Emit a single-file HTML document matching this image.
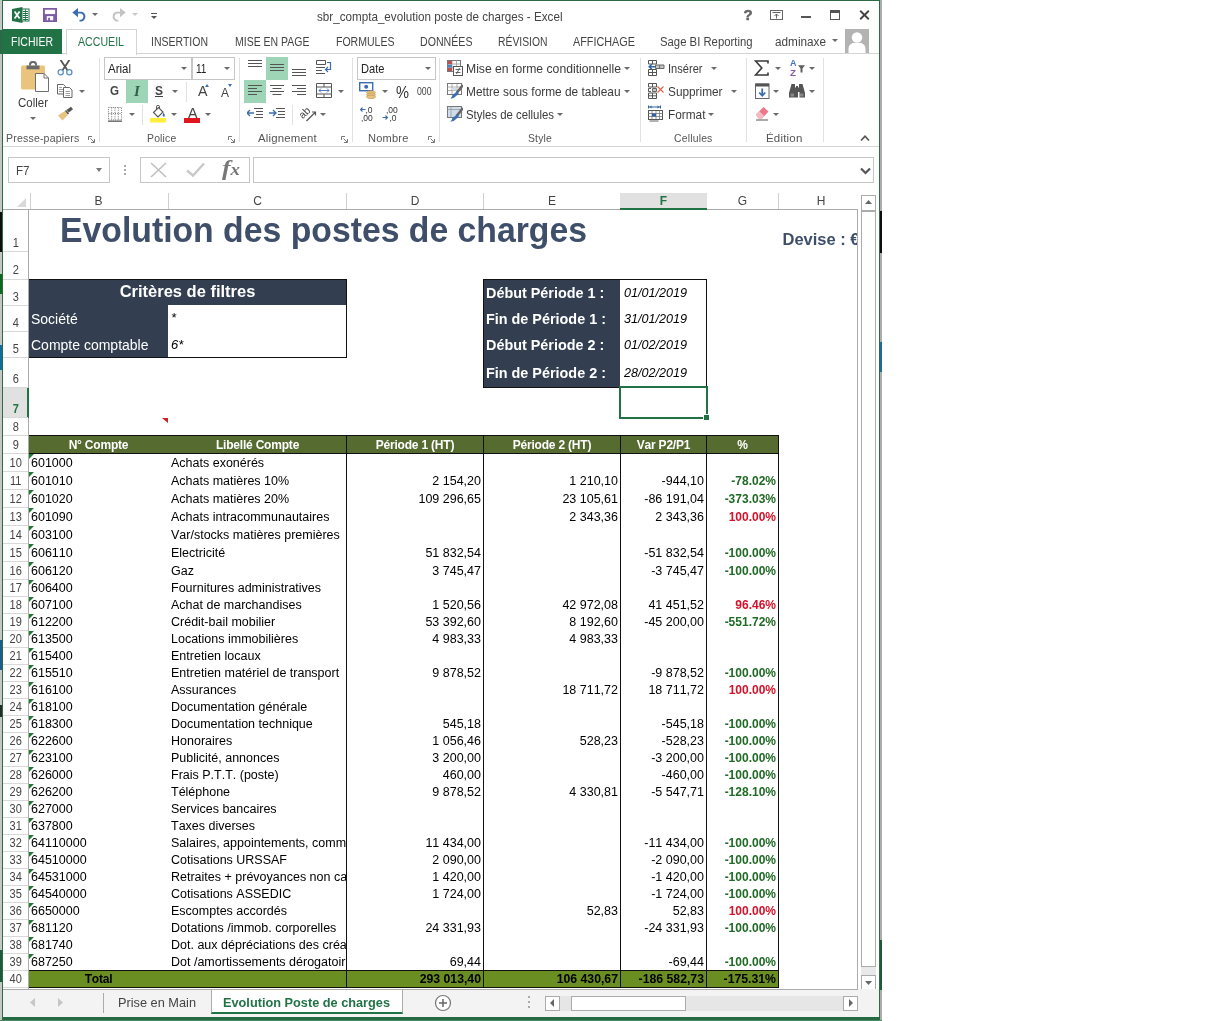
<!DOCTYPE html><html lang="fr"><head>
<meta charset="utf-8">
<title>sbr_compta_evolution poste de charges - Excel</title>
<style>
html,body{margin:0;padding:0;background:#fff;}
body{width:1228px;height:1021px;position:relative;overflow:hidden;font-family:"Liberation Sans",sans-serif;font-size:12px;color:#444;}
.a{position:absolute;}
.t{position:absolute;white-space:nowrap;line-height:1;}
.ui{color:#444;font-size:12px;}
.tab{position:absolute;top:36px;font-size:12.5px;line-height:13px;white-space:nowrap;color:#444;}
.gl{position:absolute;top:132px;font-size:11.5px;line-height:13px;white-space:nowrap;color:#555;letter-spacing:.2px;}
.rb{position:absolute;font-size:13px;line-height:14px;white-space:nowrap;color:#3c3c3c;}
.vsep{position:absolute;top:58px;width:1px;height:84px;background:#e1e1e1;}
.dd{position:absolute;width:0;height:0;border-left:3px solid transparent;border-right:3px solid transparent;border-top:3px solid #6a6a6a;}
.ch{position:absolute;top:193px;height:16px;line-height:16px;font-size:12px;text-align:center;color:#444;}
.chs{position:absolute;top:193px;width:1px;height:16px;background:#d0d0d0;}
.rh{position:absolute;left:3px;width:25.5px;text-align:center;font-size:12px;line-height:13px;color:#444;transform:scaleX(.92);margin-top:-.6px;}
.rl{position:absolute;left:3px;width:25px;height:1px;background:#d8d8d8;}
.c{position:absolute;white-space:nowrap;font-size:12.5px;line-height:14px;color:#000;font-kerning:none;}
.b{font-weight:bold;font-size:12px;letter-spacing:-.2px;}
.r{text-align:right;}
.g{color:#1f6a24;font-weight:bold;font-size:12px;}
.rd{color:#d3122a;font-weight:bold;font-size:12px;}
.tt{font-weight:bold;font-size:12.25px;}
.tri{position:absolute;left:29px;width:0;height:0;border-top:5px solid #1e7b34;border-right:5px solid transparent;}
</style>
</head>
<body>
<div id="app" style="position:absolute;left:0;top:0;width:1228px;height:1021px;will-change:transform">
<!-- ===== background bits outside window ===== -->
<div class="a" style="left:0;top:0;width:3px;height:1021px;background:#c3c9c4;"></div>
<div class="a" style="left:880px;top:0;width:2px;height:1021px;background:#a9aeab;"></div>
<div class="a" style="left:0;top:1020px;width:882px;height:1px;background:#4f8465;"></div>
<div class="a" style="left:0;top:30px;width:2px;height:24px;background:#2a6b47"></div>
<div class="a" style="left:0;top:212px;width:2px;height:40px;background:#0c0f0c"></div>
<div class="a" style="left:0;top:274px;width:2px;height:20px;background:#0a6a1a"></div>
<div class="a" style="left:0;top:345px;width:2px;height:25px;background:#0f6f9a"></div>
<div class="a" style="left:0;top:640px;width:2px;height:30px;background:#1b5f8a"></div>
<div class="a" style="left:0;top:705px;width:2px;height:12px;background:#20302a"></div>
<div class="a" style="left:0;top:950px;width:2px;height:32px;background:#1d5a38"></div>
<div class="a" style="left:880px;top:211px;width:2px;height:42px;background:#0c0f0c"></div>
<div class="a" style="left:880px;top:342px;width:2px;height:30px;background:#1b6f95"></div>
<div class="a" style="left:880px;top:940px;width:2px;height:50px;background:#1d5a38"></div>
<!-- ===== window frame ===== -->
<div id="win" class="a" style="left:2px;top:0;width:876px;height:1016px;background:#fff;border:1px solid #2b6b45;border-bottom:3px solid #246a43;"></div>

<!-- TITLEBAR -->
<div id="titlebar">
<!-- excel logo -->
<svg class="a" style="left:12px;top:7px" width="18" height="16" viewBox="0 0 18 16">
<rect x="9" y="2" width="8" height="12" fill="#fff" stroke="#217346" stroke-width="1"></rect>
<path d="M11 4.5h5M11 6.5h5M11 8.5h5M11 10.5h5M11 12.5h5" stroke="#217346" stroke-width="1"></path>
<path d="M13.5 2v12" stroke="#217346" stroke-width=".8"></path>
<path d="M0 2 L10.5 0 V16 L0 14Z" fill="#217346"></path>
<path d="M2.6 4.6 L7.6 11.6 M7.6 4.6 L2.6 11.6" stroke="#fff" stroke-width="1.7"></path>
</svg>
<!-- save -->
<svg class="a" style="left:43px;top:8px" width="14" height="14" viewBox="0 0 15 15">
<path d="M1 1h13v13H1z" fill="none" stroke="#7d5ba6" stroke-width="2"></path>
<rect x="1" y="6.5" width="13" height="2.2" fill="#7d5ba6"></rect>
<rect x="1" y="8" width="3" height="6" fill="#7d5ba6"></rect><rect x="11" y="8" width="3" height="6" fill="#7d5ba6"></rect>
<rect x="5.5" y="10.5" width="2" height="3.5" fill="#7d5ba6"></rect>
</svg>
<!-- undo -->
<svg class="a" style="left:71.5px;top:6.500px" width="17" height="15" viewBox="0 0 17 15">
<path d="M2.2 5.6 H9.5 A4.2 4.2 0 0 1 9.5 13.6 H7.5" fill="none" stroke="#3b6db5" stroke-width="1.9"></path>
<path d="M0.3 5.6 L6 1 V10.2Z" fill="#3b6db5"></path>
</svg>
<div class="dd" style="left:92px;top:13px"></div>
<!-- redo -->
<svg class="a" style="left:109px;top:6.500px" width="17" height="15" viewBox="0 0 17 15">
<path d="M14.8 5.6 H7.5 A4.2 4.2 0 0 0 7.5 13.6 H9.5" fill="none" stroke="#c3c3c3" stroke-width="1.9"></path>
<path d="M16.7 5.6 L11 1 V10.2Z" fill="#c3c3c3"></path>
</svg>
<div class="dd" style="left:131.5px;top:13px;border-top-color:#c8c8c8"></div>
<!-- customize -->
<div class="a" style="left:151px;top:13px;width:6px;height:1px;background:#555"></div>
<div class="dd" style="left:150.5px;top:16px;border-top-color:#555"></div>
<div class="t" id="ttl" style="left: 317px; top: 10px; font-size: 13px; color: rgb(68, 68, 68); --w: 245.5; transform: scaleX(0.8963); transform-origin: 0px 50%;">sbr_compta_evolution poste de charges - Excel</div>
<!-- window buttons -->
<div class="t" style="left:743.5px;top:7px;font-size:15px;font-weight:bold;color:#666;-webkit-text-stroke:.5px #666;">?</div>
<svg class="a" style="left:770px;top:10px" width="13" height="10" viewBox="0 0 13 10"><rect x=".5" y=".5" width="12" height="9" fill="none" stroke="#666"></rect><path d="M2.500 2.500h8" stroke="#666"></path><path d="M6.500 8.500V4M4.500 6L6.500 4 8.500 6" stroke="#666" fill="none"></path></svg>
<div class="a" style="left:801px;top:16px;width:10px;height:2px;background:#555"></div>
<div class="a" style="left:830px;top:10px;width:8px;height:6px;border:1px solid #555;border-top:3px solid #555"></div>
<svg class="a" style="left:859px;top:10px" width="11" height="10" viewBox="0 0 11 10"><path d="M1.200 .8l8.600 8.400M9.800 .8L1.200 9.200" stroke="#444" stroke-width="1.900"></path></svg>
</div>
<!-- TABS -->
<div id="tabs">
<div class="a" style="left:3px;top:53px;width:876px;height:1px;background:#d4d4d4"></div>
<div class="a" style="left:3px;top:29px;width:59px;height:25px;background:#217346"></div>
<div class="tab" style="left: 11px; color: rgb(255, 255, 255); --w: 42; transform: scaleX(0.84); transform-origin: 0px 50%;">FICHIER</div>
<div class="a" style="left:66px;top:29px;width:69px;height:25px;background:#fff;border:1px solid #d4d4d4;border-bottom:none;"></div>
<div class="tab" style="left: 78px; color: rgb(33, 115, 70); --w: 46; transform: scaleX(0.8489); transform-origin: 0px 50%;">ACCUEIL</div>
<div class="tab" style="left: 151px; --w: 57; transform: scaleX(0.8402); transform-origin: 0px 50%;">INSERTION</div>
<div class="tab" style="left: 235px; --w: 74.5; transform: scaleX(0.84); transform-origin: 0px 50%;">MISE EN PAGE</div>
<div class="tab" style="left: 336px; --w: 58.5; transform: scaleX(0.8423); transform-origin: 0px 50%;">FORMULES</div>
<div class="tab" style="left: 420px; --w: 52.5; transform: scaleX(0.8491); transform-origin: 0px 50%;">DONNÉES</div>
<div class="tab" style="left: 498px; --w: 49.5; transform: scaleX(0.8285); transform-origin: 0px 50%;">RÉVISION</div>
<div class="tab" style="left: 573px; --w: 62; transform: scaleX(0.8666); transform-origin: 0px 50%;">AFFICHAGE</div>
<div class="tab" style="left: 660px; --w: 92.5; transform: scaleX(0.9055); transform-origin: 0px 50%;">Sage BI Reporting</div>
<div class="tab" style="left: 775px; --w: 51; transform: scaleX(0.9409); transform-origin: 0px 50%;">adminaxe</div>
<div class="dd" style="left:832px;top:39px"></div>
<!-- avatar -->
<svg class="a" style="left:845px;top:29px" width="24" height="24" viewBox="0 0 24 24"><rect width="24" height="24" fill="#b3b3b3"></rect><circle cx="12" cy="8.500" r="5.200" fill="#fff"></circle><path d="M3.500 24v-4c0-3.500 2.500-6 5.500-6h6c3 0 5.500 2.500 5.500 6v4z" fill="#fff"></path></svg>
</div>
<!-- RIBBON -->
<div id="ribbon">
<div class="a" style="left:3px;top:146px;width:876px;height:1px;background:#d4d4d4"></div>
<!-- group separators -->
<div class="vsep" style="left:99px"></div><div class="vsep" style="left:239px"></div><div class="vsep" style="left:352px"></div><div class="vsep" style="left:439px"></div><div class="vsep" style="left:640px"></div><div class="vsep" style="left:746px"></div><div class="vsep" style="left:823px"></div>
<!-- group labels -->
<div class="gl" style="left: 6px; --w: 73.5; transform: scaleX(0.9171); transform-origin: 0px 50%;">Presse-papiers</div>
<div class="gl" style="left: 146.5px; --w: 29.5; transform: scaleX(0.9068); transform-origin: 0px 50%;">Police</div>
<div class="gl" style="left: 258px; --w: 59; transform: scaleX(0.9908); transform-origin: 0px 50%;">Alignement</div>
<div class="gl" style="left: 367.5px; --w: 40.5; transform: scaleX(0.9618); transform-origin: 0px 50%;">Nombre</div>
<div class="gl" style="left: 528px; --w: 24; transform: scaleX(0.903); transform-origin: 0px 50%;">Style</div>
<div class="gl" style="left: 674px; --w: 38.5; transform: scaleX(0.9055); transform-origin: 0px 50%;">Cellules</div>
<div class="gl" style="left: 766px; --w: 36.5; transform: scaleX(0.9979); transform-origin: 0px 50%;">Édition</div>
<!-- launchers -->
<svg class="a" style="left:88px;top:136px" width="7" height="7" viewBox="0 0 7 7"><path d="M.5 4V.5H4" fill="none" stroke="#777"></path><path d="M2.5 2.5L6 6M6.5 3v3.500H3" fill="none" stroke="#777"></path></svg>
<svg class="a" style="left:228px;top:136px" width="7" height="7" viewBox="0 0 7 7"><path d="M.5 4V.5H4" fill="none" stroke="#777"></path><path d="M2.5 2.5L6 6M6.5 3v3.500H3" fill="none" stroke="#777"></path></svg>
<svg class="a" style="left:341px;top:136px" width="7" height="7" viewBox="0 0 7 7"><path d="M.5 4V.5H4" fill="none" stroke="#777"></path><path d="M2.5 2.5L6 6M6.5 3v3.500H3" fill="none" stroke="#777"></path></svg>
<svg class="a" style="left:428px;top:136px" width="7" height="7" viewBox="0 0 7 7"><path d="M.5 4V.5H4" fill="none" stroke="#777"></path><path d="M2.5 2.5L6 6M6.5 3v3.500H3" fill="none" stroke="#777"></path></svg>
<!-- collapse chevron -->
<svg class="a" style="left:860px;top:134px" width="10" height="8" viewBox="0 0 10 8"><path d="M1 6.500L5 2.200 9 6.500" fill="none" stroke="#555" stroke-width="1.700"></path></svg>
<!-- CLIPBOARD group -->
<svg class="a" style="left:21px;top:61px" width="29" height="31" viewBox="0 0 29 31">
<rect x="0" y="4.500" width="24" height="24" rx="1.500" fill="#eac37d"></rect>
<path d="M5.500 4.500h13v3.800h-13z" fill="#6a6a6a"></path><path d="M9 4.500V3.500a3 2.600 0 0 1 6 0V4.500" fill="none" stroke="#6a6a6a" stroke-width="2"></path><circle cx="12" cy="3.300" r="1" fill="#fff"></circle>
<path d="M14.500 12.500H23L27.500 17V30.500H14.500Z" fill="#fff" stroke="#707070"></path><path d="M23 12.500V17H27.500" fill="none" stroke="#707070"></path>
</svg>
<div class="rb" style="left: 17.5px; top: 96px; font-size: 13px; --w: 30; transform: scaleX(0.8832); transform-origin: 0px 50%;">Coller</div>
<div class="dd" style="left:30px;top:117px"></div>
<!-- scissors -->
<svg class="a" style="left:57px;top:60px" width="16" height="16" viewBox="0 0 16 16">
<path d="M3.800 .3 L10.300 10 M12.200 .3 L5.700 10" stroke="#555" stroke-width="1.800" fill="none" stroke-linecap="round"></path>
<circle cx="3.700" cy="12.300" r="2.600" fill="#fff" stroke="#5c8fc9" stroke-width="1.300"></circle><circle cx="12.300" cy="12.300" r="2.600" fill="#fff" stroke="#5c8fc9" stroke-width="1.300"></circle>
</svg>
<!-- copy -->
<svg class="a" style="left:57px;top:84px" width="16" height="14" viewBox="0 0 16 14">
<path d="M.5 .5h6l2 2v7.500h-8z" fill="#fff" stroke="#666"></path><path d="M2 3.500h3M2 5.500h4M2 7.500h4" stroke="#888" stroke-width=".8"></path>
<path d="M6.500 3.500h6l2.500 2.500v7.500h-8.500z" fill="#fff" stroke="#666"></path><path d="M8.500 7.500h4.500M8.500 9.500h4.500M8.500 11.500h4.500" stroke="#888" stroke-width=".8"></path>
</svg>
<div class="dd" style="left:79px;top:90px"></div>
<!-- format painter -->
<svg class="a" style="left:57px;top:106px" width="17" height="15" viewBox="0 0 17 15">
<path d="M9.500 4 L14 .8 L16 3.200 L11.800 6.500Z" fill="#555"></path>
<path d="M8.500 4.500 L11.500 8" stroke="#555" stroke-width="1.800"></path>
<path d="M1 9.500 L7.800 5 L11 8.800 L5.500 14.500 Z" fill="#e8c27e"></path>
</svg>
<!-- FONT group -->
<div class="a" style="left:104px;top:57px;width:86px;height:21px;border:1px solid #c6c6c6;background:#fff"></div>
<div class="a" style="left:192px;top:57px;width:41px;height:21px;border:1px solid #c6c6c6;background:#fff"></div>
<div class="rb" style="left: 107.5px; top: 62px; color: rgb(34, 34, 34); --w: 23; transform: scaleX(0.8841); transform-origin: 0px 50%;">Arial</div>
<div class="dd" style="left:181px;top:67px"></div>
<div class="rb" style="left: 196px; top: 62px; color: rgb(34, 34, 34); --w: 10.5; transform: scaleX(0.7778); transform-origin: 0px 50%;">11</div>
<div class="dd" style="left:224px;top:67px"></div>
<div class="a" style="left:126px;top:80px;width:22px;height:23px;background:#9fd5b7"></div>
<div class="rb" style="left: 110px; top: 84px; font-weight: bold; font-size: 13px; color: rgb(68, 68, 68); --w: 9; transform: scaleX(0.8889); transform-origin: 0px 50%;">G</div>
<div class="rb" style="left:134px;top:83.5px;font-style:italic;font-weight:bold;font-size:15px;font-family:'Liberation Serif',serif;color:#2f5f49;">I</div>
<div class="rb" style="left: 155px; top: 84px; font-size: 13px; font-weight: bold; color: rgb(68, 68, 68); text-decoration: underline; --w: 8; transform: scaleX(0.9225); transform-origin: 0px 50%;">S</div>
<div class="dd" style="left:172px;top:90px"></div>
<div class="a" style="left:186px;top:82px;width:1px;height:20px;background:#e1e1e1"></div>
<div class="rb" style="left: 197.5px; top: 84px; font-size: 14.5px; color: rgb(68, 68, 68); --w: 9.5; transform: scaleX(0.9822); transform-origin: 0px 50%;">A</div>
<div class="a" style="left:205px;top:84px;width:0;height:0;border-left:2.5px solid transparent;border-right:2.5px solid transparent;border-bottom:3px solid #3b6db5"></div>
<div class="rb" style="left: 220.5px; top: 86px; font-size: 12px; color: rgb(68, 68, 68); --w: 8; transform: scaleX(0.9981); transform-origin: 0px 50%;">A</div>
<div class="a" style="left:227.5px;top:84px;width:0;height:0;border-left:2.5px solid transparent;border-right:2.5px solid transparent;border-top:3px solid #3b6db5"></div>
<!-- borders icon -->
<svg class="a" style="left:108px;top:107px" width="14" height="15" viewBox="0 0 14 15"><path d="M.5 .5h13v12.500H.5zM7 .5v12.500M.5 6.500h13M3.700 .5v12.500M10.300 .5v12.500" fill="none" stroke="#777" stroke-dasharray="1 1.200"></path><path d="M0 14.200h14" stroke="#555" stroke-width="1.200"></path></svg>
<div class="dd" style="left:129px;top:113px"></div>
<div class="a" style="left:142px;top:105px;width:1px;height:20px;background:#e1e1e1"></div>
<!-- fill bucket -->
<svg class="a" style="left:150px;top:105px" width="17" height="18" viewBox="0 0 17 18">
<path d="M3.500 7.500 L8.500 2.500 L13 7 L8 12 Z" fill="#fff" stroke="#555" stroke-width="1.100"></path>
<path d="M6.500 5 V1.800 a1.500 1.500 0 0 1 3 0 V4" fill="none" stroke="#555" stroke-width="1"></path>
<path d="M13.300 7.300 q2 2.500 1.200 4.200 q-1.500 .8 -1.800 -1.200z" fill="#3b6db5"></path>
<rect x="0" y="13" width="16" height="4.500" fill="#ffef3a"></rect>
</svg>
<div class="dd" style="left:171px;top:113px"></div>
<!-- font color -->
<div class="rb" style="left: 187.5px; top: 106px; font-size: 14.5px; color: rgb(68, 68, 68); --w: 9.5; transform: scaleX(0.9822); transform-origin: 0px 50%;">A</div>
<div class="a" style="left:184px;top:118px;width:16px;height:4.500px;background:#e0161e"></div>
<div class="dd" style="left:205px;top:113px"></div>
<!-- ALIGN group -->
<div class="a" style="left:266px;top:57px;width:22px;height:23px;background:#9fd5b7"></div>
<div class="a" style="left:244px;top:80px;width:22px;height:23px;background:#9fd5b7"></div>
<!-- top/middle/bottom align -->
<svg class="a" style="left:248px;top:60px" width="14" height="8" viewBox="0 0 14 8"><path d="M0 .5h14M0 3.500h14M0 6.500h14" stroke="#555"></path></svg>
<svg class="a" style="left:270px;top:64px" width="14" height="8" viewBox="0 0 14 8"><path d="M0 .5h14M0 3.500h14M0 6.500h14" stroke="#555"></path></svg>
<svg class="a" style="left:292px;top:69px" width="14" height="8" viewBox="0 0 14 8"><path d="M0 .5h14M0 3.500h14M0 6.500h14" stroke="#555"></path></svg>
<!-- wrap text -->
<svg class="a" style="left:316px;top:60px" width="17" height="15" viewBox="0 0 17 15"><path d="M.5 .5h9v4H.5z" fill="none" stroke="#555"></path><path d="M0 7.500h9M0 10.500h6M0 13.500h9" stroke="#555"></path><path d="M11 2.500h3.500v7H10" fill="none" stroke="#3b6db5" stroke-width="1.200"></path><path d="M12 7L9.500 9.500 12 12" fill="none" stroke="#3b6db5" stroke-width="1.200"></path></svg>
<!-- left/center/right -->
<svg class="a" style="left:248px;top:85px" width="14" height="12" viewBox="0 0 14 12"><path d="M0 .5h14M0 3.500h9M0 6.500h14M0 9.500h9" stroke="#555"></path></svg>
<svg class="a" style="left:270px;top:85px" width="14" height="12" viewBox="0 0 14 12"><path d="M0 .5h14M2.500 3.500h9M0 6.500h14M2.500 9.500h9" stroke="#555"></path></svg>
<svg class="a" style="left:292px;top:85px" width="14" height="12" viewBox="0 0 14 12"><path d="M0 .5h14M5 3.500h9M0 6.500h14M5 9.500h9" stroke="#555"></path></svg>
<!-- merge -->
<svg class="a" style="left:316px;top:83px" width="16" height="15" viewBox="0 0 16 15"><path d="M.5 .5h15v14H.5zM.5 4h15M.5 11h15M8 .5V4M8 11v3.500" fill="none" stroke="#555"></path><path d="M3 7.500h10M5 5.500L3 7.500 5 9.500M11 5.500l2 2-2 2" fill="none" stroke="#3b6db5" stroke-width=".9"></path></svg>
<div class="dd" style="left:338px;top:90px"></div>
<!-- indents -->
<svg class="a" style="left:247px;top:108px" width="16" height="12" viewBox="0 0 16 12"><path d="M7 .5h9M9 3.500h7M9 6.500h7M7 9.500h9" stroke="#555"></path><path d="M0 5h7M3 2L0 5l3 3" fill="none" stroke="#3b6db5" stroke-width="1.300"></path></svg>
<svg class="a" style="left:269px;top:108px" width="16" height="12" viewBox="0 0 16 12"><path d="M7 .5h9M9 3.500h7M9 6.500h7M7 9.500h9" stroke="#555"></path><path d="M0 5h7M4 2l3 3-3 3" fill="none" stroke="#3b6db5" stroke-width="1.300"></path></svg>
<div class="a" style="left:292px;top:105px;width:1px;height:20px;background:#e1e1e1"></div>
<!-- orientation -->
<svg class="a" style="left:300px;top:105px" width="18" height="17" viewBox="0 0 18 17"><text x="0" y="10.500" font-family="Liberation Sans, sans-serif" font-size="10.500" fill="#444" transform="rotate(-45 6 9)">ab</text><path d="M6.500 16L15.500 7M15.500 10.500V7H12" fill="none" stroke="#555" stroke-width="1.200"></path></svg>
<div class="dd" style="left:320px;top:113px"></div>
<!-- NUMBER group -->
<div class="a" style="left:357px;top:57px;width:77px;height:21px;border:1px solid #c6c6c6;background:#fff"></div>
<div class="rb" style="left: 360.5px; top: 62px; color: rgb(34, 34, 34); --w: 23.5; transform: scaleX(0.8555); transform-origin: 0px 50%;">Date</div>
<div class="dd" style="left:425px;top:67px"></div>
<!-- currency -->
<svg class="a" style="left:359px;top:82px" width="18" height="17" viewBox="0 0 18 17"><rect x=".7" y=".7" width="13" height="8" fill="#fff" stroke="#3b6db5" stroke-width="1.400"></rect><circle cx="7.200" cy="4.700" r="2" fill="#3b6db5"></circle><ellipse cx="12" cy="10.500" rx="4.500" ry="1.800" fill="#e8c27e" stroke="#b8924e" stroke-width=".6"></ellipse><ellipse cx="12" cy="12.700" rx="4.500" ry="1.800" fill="#e8c27e" stroke="#b8924e" stroke-width=".6"></ellipse><ellipse cx="12" cy="14.800" rx="4.500" ry="1.800" fill="#e8c27e" stroke="#b8924e" stroke-width=".6"></ellipse></svg>
<div class="dd" style="left:382px;top:90px"></div>
<div class="rb" style="left: 396px; top: 83.5px; font-size: 16px; line-height: 18px; color: rgb(51, 51, 51); --w: 13; transform: scaleX(0.9133); transform-origin: 0px 50%;">%</div>
<div class="rb" style="left: 417px; top: 85px; font-size: 11px; line-height: 12px; color: rgb(68, 68, 68); --w: 14.5; transform: scaleX(0.7898); transform-origin: 0px 50%;">000</div>
<!-- inc/dec decimals -->
<svg class="a" style="left:360px;top:106px" width="16" height="16" viewBox="0 0 16 16"><text x="5.500" y="6.500" font-family="Liberation Sans, sans-serif" font-size="8.500" fill="#333">,0</text><text x="1" y="14.500" font-family="Liberation Sans, sans-serif" font-size="8.500" fill="#333">,00</text><path d="M.5 3.500h5M2.500 1.500l-2 2 2 2" fill="none" stroke="#3b6db5" stroke-width="1.100"></path></svg>
<svg class="a" style="left:382px;top:106px" width="16" height="16" viewBox="0 0 16 16"><text x="4" y="6.500" font-family="Liberation Sans, sans-serif" font-size="8.500" fill="#333">,00</text><text x="7.500" y="14.500" font-family="Liberation Sans, sans-serif" font-size="8.500" fill="#333">,0</text><path d="M.5 11.500h5M3.500 9.500l2 2-2 2" fill="none" stroke="#3b6db5" stroke-width="1.100"></path></svg>
<!-- STYLE group -->
<svg class="a" style="left:447px;top:60px" width="16" height="16" viewBox="0 0 16 16"><rect x=".5" y=".5" width="13" height="11" fill="#fff" stroke="#777"></rect><path d="M.5 4h13M.5 7.500h13M5 .5v11M9.500 .5v11" stroke="#999" stroke-width=".8"></path><rect x="1" y="1" width="4" height="3" fill="#c0504d"></rect><rect x="1" y="4.500" width="4" height="3" fill="#4f81bd"></rect><rect x="1" y="8" width="4" height="3" fill="#c0504d"></rect><rect x="6.500" y="6.500" width="9" height="9" fill="#fff" stroke="#555"></rect><path d="M8.500 9.500h5M8.500 12.500h5M12.500 8l-3 6" stroke="#555" stroke-width=".9"></path></svg>
<svg class="a" style="left:447px;top:83px" width="16" height="16" viewBox="0 0 16 16"><rect x=".5" y=".5" width="14" height="11" fill="#fff" stroke="#777"></rect><path d="M.5 4h14M.5 7.500h14M5 .5v11M10 .5v11" stroke="#999" stroke-width=".8"></path><rect x="5.500" y="4.500" width="4" height="3" fill="#cfdcec"></rect><path d="M15.200 3L10 9.500" stroke="#666" stroke-width="2.600" stroke-linecap="round"></path><path d="M10.500 8.500q1.500 1 1 2.500L7 14.800q-2 1-3.500 .5 1.500-1 2-3.500z" fill="#3f6fb0"></path></svg>
<svg class="a" style="left:447px;top:106px" width="16" height="16" viewBox="0 0 16 16"><rect x=".5" y=".5" width="14" height="11" fill="#cfdcec" stroke="#777"></rect><path d="M.5 3.500h14M4 .5v11" stroke="#999" stroke-width=".8"></path><path d="M15.200 3L10 9.500" stroke="#666" stroke-width="2.600" stroke-linecap="round"></path><path d="M10.500 8.500q1.500 1 1 2.500L7 14.800q-2 1-3.500 .5 1.500-1 2-3.500z" fill="#3f6fb0"></path></svg>
<div class="rb" style="left: 466px; top: 62px; --w: 155; transform: scaleX(0.9366); transform-origin: 0px 50%;">Mise en forme conditionnelle</div>
<div class="dd" style="left:624px;top:67px"></div>
<div class="rb" style="left: 466px; top: 85px; --w: 154.5; transform: scaleX(0.9137); transform-origin: 0px 50%;">Mettre sous forme de tableau</div>
<div class="dd" style="left:624px;top:90px"></div>
<div class="rb" style="left: 466px; top: 108px; --w: 88; transform: scaleX(0.876); transform-origin: 0px 50%;">Styles de cellules</div>
<div class="dd" style="left:556.5px;top:113px"></div>
<!-- CELLS group -->
<svg class="a" style="left:648px;top:60px" width="17" height="16" viewBox="0 0 17 16"><path d="M.5 .5h8v3.500h-8zM4.500 .5v3.500M.5 9.500h8v6h-8zM4.500 9.500v6M.5 12.500h8" fill="#fff" stroke="#555"></path><path d="M7.500 5h8.500v3.500H7.500z" fill="#c8c8c8" stroke="#666"></path><path d="M11.700 5v3.500" stroke="#666"></path><path d="M7 6.800H1.500M3.800 4.300L1.200 6.800l2.600 2.500" fill="none" stroke="#2f62a8" stroke-width="1.500"></path></svg>
<svg class="a" style="left:648px;top:83px" width="17" height="16" viewBox="0 0 17 16"><path d="M.5 .5h8v3.500h-8zM4.500 .5v3.500M.5 10h8v5.500h-8zM4.500 10v5.500M.5 12.800h8" fill="#fff" stroke="#555"></path><path d="M4.500 5.500h4v3h-4z" fill="#c8c8c8" stroke="#666"></path><path d="M.5 5.500h2.500M.5 5.500v3h2.500" fill="none" stroke="#555"></path><path d="M9.500 3.500l6 6M15.500 3.500l-6 6" stroke="#df6b4f" stroke-width="1.300"></path></svg>
<svg class="a" style="left:648px;top:105px" width="17" height="17" viewBox="0 0 17 17"><path d="M.5 .5v3M12.500 .5v3M.5 2h12" stroke="#2f62a8" fill="none"></path><path d="M3.500 .5l-2 1.500 2 1.500zM9.500 .5l2 1.500-2 1.500z" fill="#2f62a8"></path><rect x=".5" y="5.500" width="14" height="9" fill="#fff" stroke="#555"></rect><path d="M.5 8.500h14M.5 11.500h14M4 5.500v9M8 5.500v9M11.500 5.500v9" stroke="#777" stroke-width=".8"></path><rect x="4" y="8.500" width="4" height="3" fill="#2f62a8"></rect><path d="M1.500 16h9" stroke="#666"></path></svg>
<div class="rb" style="left: 667.5px; top: 62px; --w: 34.5; transform: scaleX(0.8525); transform-origin: 0px 50%;">Insérer</div>
<div class="dd" style="left:711px;top:67px"></div>
<div class="rb" style="left: 667.5px; top: 85px; --w: 54.5; transform: scaleX(0.9088); transform-origin: 0px 50%;">Supprimer</div>
<div class="dd" style="left:731px;top:90px"></div>
<div class="rb" style="left: 667.5px; top: 108px; --w: 37.5; transform: scaleX(0.9108); transform-origin: 0px 50%;">Format</div>
<div class="dd" style="left:707.5px;top:113px"></div>
<!-- EDIT group -->
<svg class="a" style="left:754px;top:60px" width="15" height="16" viewBox="0 0 15 16"><path d="M14 3.500V1H1.500l6.300 7L1.500 15H14v-2.500" fill="none" stroke="#3a3a3a" stroke-width="1.600"></path></svg>
<div class="dd" style="left:775px;top:67px"></div>
<div class="rb" style="left: 789.5px; top: 58px; font-size: 9.5px; line-height: 10px; font-weight: bold; color: rgb(63, 116, 184); --w: 6.500; transform: scaleX(0.9455); transform-origin: 0px 50%;">A</div>
<div class="rb" style="left: 790px; top: 67.5px; font-size: 9.5px; line-height: 10px; font-weight: bold; color: rgb(139, 91, 166); --w: 6; transform: scaleX(1.0323); transform-origin: 0px 50%;">Z</div>
<svg class="a" style="left:798px;top:65px" width="7" height="8" viewBox="0 0 7 8"><path d="M0 .3h7L4.500 3.500v4h-2v-4z" fill="#606060"></path></svg>
<div class="dd" style="left:809px;top:67px"></div>
<svg class="a" style="left:755px;top:83px" width="15" height="16" viewBox="0 0 15 16"><rect x=".5" y="1" width="13.500" height="14.500" fill="#fff" stroke="#666"></rect><rect x=".5" y=".5" width="13.500" height="3" fill="#555"></rect><path d="M7.250 5.500v7M4.200 9.500l3.050 3.200 3.050-3.200" fill="none" stroke="#3b6db5" stroke-width="1.800"></path></svg>
<div class="dd" style="left:773px;top:90px"></div>
<svg class="a" style="left:789px;top:83px" width="16" height="15" viewBox="0 0 16 15"><path d="M2.500 1h3.500v3.500h1V3h2v1.500h1V1h3.500l2.500 9v4.500h-5.500V9h-1.500v5.500H0V10z" fill="#555"></path><path d="M1.500 10.500h3.500v3h-3.500zM11 10.500h3.500v3H11z" fill="#888"></path></svg>
<div class="dd" style="left:809px;top:90px"></div>
<svg class="a" style="left:755px;top:106px" width="15" height="15" viewBox="0 0 15 15"><path d="M1 8.500L8.500 1 13.500 5.500 7 12.500H3.500z" fill="#e8788a"></path><path d="M1 8.500l3.300-3.300 5 4.500L7 12.500H3.500z" fill="#f4b9c2"></path><path d="M1 14h12" stroke="#555" stroke-width="1"></path></svg>
<div class="dd" style="left:773px;top:113px"></div>
</div>
<!-- FORMULA -->
<div id="formula">
<div class="a" style="left:8px;top:157px;width:100px;height:24px;border:1px solid #c6c6c6;background:#fff"></div>
<div class="t" style="left: 15.5px; top: 165px; font-size: 12.5px; color: rgb(68, 68, 68); --w: 13.5; transform: scaleX(0.9251); transform-origin: 0px 50%;">F7</div>
<div class="a" style="left:96px;top:168px;width:0;height:0;border-left:3.5px solid transparent;border-right:3.5px solid transparent;border-top:4px solid #777"></div>
<div class="a" style="left:124px;top:165px;width:2px;height:2px;background:#aaa"></div><div class="a" style="left:124px;top:169px;width:2px;height:2px;background:#aaa"></div><div class="a" style="left:124px;top:173px;width:2px;height:2px;background:#aaa"></div>
<div class="a" style="left:140px;top:157px;width:108px;height:24px;border:1px solid #c6c6c6;background:#fff"></div>
<svg class="a" style="left:150px;top:162px" width="17" height="16" viewBox="0 0 17 16"><path d="M1 1l15 14M16 1L1 15" stroke="#c0c0c0" stroke-width="1.600"></path></svg>
<svg class="a" style="left:186px;top:162px" width="19" height="16" viewBox="0 0 19 16"><path d="M1 8.500l6 5L18 1.500" fill="none" stroke="#c8c8c8" stroke-width="2.400"></path></svg>
<div class="t" style="left: 221.5px; top: 157px; font-family: &quot;Liberation Serif&quot;, serif; font-style: italic; font-weight: bold; font-size: 22px; color: rgb(119, 119, 119); --w: 18; transform: scaleX(1.1743); transform-origin: 0px 50%;">f<span style="font-size:16px">x</span></div>
<div class="a" style="left:253px;top:157px;width:619px;height:24px;border:1px solid #c6c6c6;background:#fff"></div>
<svg class="a" style="left:860px;top:167px" width="11" height="8" viewBox="0 0 11 8"><path d="M1 1.500l4.500 4.500L10 1.500" fill="none" stroke="#555" stroke-width="2.200"></path></svg>
</div>
<!-- HEADERS -->
<div id="headers">
<div class="a" style="left:3px;top:209px;width:855px;height:1px;background:#ababab"></div>
<div class="a" style="left:28px;top:210px;width:1px;height:779px;background:#ababab"></div>
<svg class="a" style="left:17px;top:198px" width="9" height="9" viewBox="0 0 9 9"><path d="M9 0V9H0z" fill="#d9d9d9"></path></svg>
<div class="chs" style="left:30px;top:193px;height:16px"></div>
<div class="ch" style="left:29px;width:139px">B</div>
<div class="chs" style="left:168px"></div>
<div class="ch" style="left:169px;width:177px">C</div>
<div class="chs" style="left:346px"></div>
<div class="ch" style="left:347px;width:136px">D</div>
<div class="chs" style="left:483px"></div>
<div class="ch" style="left:484px;width:136px">E</div>
<div class="a" style="left:620px;top:193px;width:87px;height:15px;background:#e1e1e1;border-bottom:2px solid #217346"></div>
<div class="ch" style="left:621px;width:85px;color:#217346;font-weight:bold">F</div>
<div class="ch" style="left:707px;width:71px">G</div>
<div class="chs" style="left:778px"></div>
<div class="ch" style="left:779px;width:84px">H</div>
<div class="rh" style="top:238px">1</div>
<div class="rl" style="top:251px"></div>
<div class="rh" style="top:265px">2</div>
<div class="rl" style="top:279px"></div>
<div class="rh" style="top:292px">3</div>
<div class="rl" style="top:305px"></div>
<div class="rh" style="top:318px">4</div>
<div class="rl" style="top:331px"></div>
<div class="rh" style="top:344px">5</div>
<div class="rl" style="top:357px"></div>
<div class="rh" style="top:374px">6</div>
<div class="rl" style="top:387px"></div>
<div class="a" style="left:3px;top:388px;width:24px;height:30px;background:#e1e1e1;border-right:2px solid #217346"></div>
<div class="rh" style="top:404px;color:#217346;font-weight:bold">7</div>
<div class="rl" style="top:417px"></div>
<div class="rh" style="top:422px">8</div>
<div class="rl" style="top:435px"></div>
<div class="rh" style="top:440px">9</div>
<div class="rl" style="top:453px"></div>
<div class="rh" style="top:458px">10</div>
<div class="rl" style="top:471px"></div>
<div class="rh" style="top:476px">11</div>
<div class="rl" style="top:489px"></div>
<div class="rh" style="top:494px">12</div>
<div class="rl" style="top:507px"></div>
<div class="rh" style="top:512px">13</div>
<div class="rl" style="top:525px"></div>
<div class="rh" style="top:530px">14</div>
<div class="rl" style="top:543px"></div>
<div class="rh" style="top:548px">15</div>
<div class="rl" style="top:561px"></div>
<div class="rh" style="top:566px">16</div>
<div class="rl" style="top:579px"></div>
<div class="rh" style="top:583px">17</div>
<div class="rl" style="top:596px"></div>
<div class="rh" style="top:600px">18</div>
<div class="rl" style="top:613px"></div>
<div class="rh" style="top:617px">19</div>
<div class="rl" style="top:630px"></div>
<div class="rh" style="top:634px">20</div>
<div class="rl" style="top:647px"></div>
<div class="rh" style="top:651px">21</div>
<div class="rl" style="top:664px"></div>
<div class="rh" style="top:668px">22</div>
<div class="rl" style="top:681px"></div>
<div class="rh" style="top:685px">23</div>
<div class="rl" style="top:698px"></div>
<div class="rh" style="top:702px">24</div>
<div class="rl" style="top:715px"></div>
<div class="rh" style="top:719px">25</div>
<div class="rl" style="top:732px"></div>
<div class="rh" style="top:736px">26</div>
<div class="rl" style="top:749px"></div>
<div class="rh" style="top:753px">27</div>
<div class="rl" style="top:766px"></div>
<div class="rh" style="top:770px">28</div>
<div class="rl" style="top:783px"></div>
<div class="rh" style="top:787px">29</div>
<div class="rl" style="top:800px"></div>
<div class="rh" style="top:804px">30</div>
<div class="rl" style="top:817px"></div>
<div class="rh" style="top:821px">31</div>
<div class="rl" style="top:834px"></div>
<div class="rh" style="top:838px">32</div>
<div class="rl" style="top:851px"></div>
<div class="rh" style="top:855px">33</div>
<div class="rl" style="top:868px"></div>
<div class="rh" style="top:872px">34</div>
<div class="rl" style="top:885px"></div>
<div class="rh" style="top:889px">35</div>
<div class="rl" style="top:902px"></div>
<div class="rh" style="top:906px">36</div>
<div class="rl" style="top:919px"></div>
<div class="rh" style="top:923px">37</div>
<div class="rl" style="top:936px"></div>
<div class="rh" style="top:940px">38</div>
<div class="rl" style="top:953px"></div>
<div class="rh" style="top:957px">39</div>
<div class="rl" style="top:970px"></div>
<div class="rh" style="top:974px">40</div>
<div class="rl" style="top:987px"></div>
</div>
<!-- SHEET -->
<div id="sheet">
<div class="a" style="left:857px;top:210px;width:1px;height:779px;background:#ababab"></div>
<div class="t" style="left: 60px; top: 212px; font-size: 35.5px; line-height: 36px; font-weight: bold; color: rgb(63, 79, 106); font-kerning: none; --w: 527; transform: scaleX(0.9507); transform-origin: 0px 50%;">Evolution des postes de charges</div>
<div class="a" style="left:779px;top:225px;width:78px;height:26px;overflow:hidden"><div class="t" style="left:3.5px;top:5px;font-size:16.5px;line-height:18px;font-weight:bold;color:#3f4f6a;font-kerning:none">Devise : €</div></div>
<div class="a" style="left:29px;top:279px;width:318px;height:79px;background:#333f50;border-top:1px solid #111;border-bottom:1px solid #111;border-right:1px solid #111;box-sizing:border-box"></div>
<div class="a" style="left:168px;top:305px;width:179px;height:53px;background:#fff;border-right:1px solid #111;border-bottom:1px solid #111;box-sizing:border-box"></div>
<div class="c" style="left:29px;top:282px;width:317px;text-align:center;font-size:16.5px;line-height:18px;font-weight:bold;color:#fff">Critères de filtres</div>
<div class="c" style="left:31px;top:311px;font-size:14px;line-height:16px;color:#fff">Société</div>
<div class="c" style="left:31px;top:337px;font-size:14px;line-height:16px;color:#fff">Compte comptable</div>
<div class="c" style="left:171px;top:311px;font-size:13px;font-style:italic">*</div>
<div class="c" style="left:171px;top:338px;font-size:13px;font-style:italic">6*</div>
<div class="a" style="left:483px;top:279px;width:224px;height:109px;background:#fff;border:1px solid #111;box-sizing:border-box"></div>
<div class="a" style="left:484px;top:280px;width:136px;height:107px;background:#333f50"></div>
<div class="c" style="left:486px;top:285px;font-size:14.4px;line-height:16px;font-weight:bold;color:#fff">Début Période 1 :</div>
<div class="c" style="left:624px;top:285px;font-size:12.6px;line-height:16px;font-style:italic">01/01/2019</div>
<div class="c" style="left:486px;top:311px;font-size:14.4px;line-height:16px;font-weight:bold;color:#fff">Fin de Période 1 :</div>
<div class="c" style="left:624px;top:311px;font-size:12.6px;line-height:16px;font-style:italic">31/01/2019</div>
<div class="c" style="left:486px;top:337px;font-size:14.4px;line-height:16px;font-weight:bold;color:#fff">Début Période 2 :</div>
<div class="c" style="left:624px;top:337px;font-size:12.6px;line-height:16px;font-style:italic">01/02/2019</div>
<div class="c" style="left:486px;top:365px;font-size:14.4px;line-height:16px;font-weight:bold;color:#fff">Fin de Période 2 :</div>
<div class="c" style="left:624px;top:365px;font-size:12.6px;line-height:16px;font-style:italic">28/02/2019</div>
<div class="a" style="left:619px;top:386px;width:85px;height:29px;border:2px solid #217346"></div>
<div class="a" style="left:703px;top:414px;width:5px;height:5px;background:#217346;border:1px solid #fff;border-right:none;border-bottom:none"></div>
<svg class="a" style="left:162px;top:418px" width="6" height="5" viewBox="0 0 6 5"><path d="M0 0h6v5z" fill="#d0202a"></path></svg>
<div class="a" style="left:29px;top:435px;width:750px;height:19px;background:#566b2f;border-top:1px solid #111;border-bottom:1px solid #111;box-sizing:border-box"></div>
<div class="a" style="left:29px;top:970px;width:750px;height:18px;background:#6b8e23;border-top:1px solid #111;border-bottom:1px solid #111;box-sizing:border-box"></div>
<div class="a" style="left:346px;top:435px;width:1px;height:553px;background:#111"></div>
<div class="a" style="left:483px;top:435px;width:1px;height:553px;background:#111"></div>
<div class="a" style="left:620px;top:435px;width:1px;height:553px;background:#111"></div>
<div class="a" style="left:706px;top:435px;width:1px;height:553px;background:#111"></div>
<div class="a" style="left:778px;top:435px;width:1px;height:553px;background:#111"></div>
<div class="c b" style="left:29px;top:438px;width:139px;text-align:center;color:#fff">N° Compte</div>
<div class="c b" style="left:169px;top:438px;width:177px;text-align:center;color:#fff">Libellé Compte</div>
<div class="c b" style="left:347px;top:438px;width:136px;text-align:center;color:#fff">Période 1 (HT)</div>
<div class="c b" style="left:484px;top:438px;width:136px;text-align:center;color:#fff">Période 2 (HT)</div>
<div class="c b" style="left:621px;top:438px;width:85px;text-align:center;color:#fff">Var P2/P1</div>
<div class="c b" style="left:707px;top:438px;width:71px;text-align:center;color:#fff">%</div>
<div class="tri" style="top:454px"></div>
<div class="c" style="left:31px;top:456px">601000</div>
<div class="c" style="left:171px;top:456px;width:175px;overflow:hidden">Achats exonérés</div>
<div class="tri" style="top:472px"></div>
<div class="c" style="left:31px;top:474px">601010</div>
<div class="c" style="left:171px;top:474px;width:175px;overflow:hidden">Achats matières 10%</div>
<div class="c r" style="left:347px;top:474px;width:134px">2 154,20</div>
<div class="c r" style="left:484px;top:474px;width:134px">1 210,10</div>
<div class="c r" style="left:621px;top:474px;width:83px">-944,10</div>
<div class="c r g" style="left:707px;top:474px;width:69px">-78.02%</div>
<div class="tri" style="top:490px"></div>
<div class="c" style="left:31px;top:492px">601020</div>
<div class="c" style="left:171px;top:492px;width:175px;overflow:hidden">Achats matières 20%</div>
<div class="c r" style="left:347px;top:492px;width:134px">109 296,65</div>
<div class="c r" style="left:484px;top:492px;width:134px">23 105,61</div>
<div class="c r" style="left:621px;top:492px;width:83px">-86 191,04</div>
<div class="c r g" style="left:707px;top:492px;width:69px">-373.03%</div>
<div class="tri" style="top:508px"></div>
<div class="c" style="left:31px;top:510px">601090</div>
<div class="c" style="left:171px;top:510px;width:175px;overflow:hidden">Achats intracommunautaires</div>
<div class="c r" style="left:484px;top:510px;width:134px">2 343,36</div>
<div class="c r" style="left:621px;top:510px;width:83px">2 343,36</div>
<div class="c r rd" style="left:707px;top:510px;width:69px">100.00%</div>
<div class="tri" style="top:526px"></div>
<div class="c" style="left:31px;top:528px">603100</div>
<div class="c" style="left:171px;top:528px;width:175px;overflow:hidden">Var/stocks matières premières</div>
<div class="tri" style="top:544px"></div>
<div class="c" style="left:31px;top:546px">606110</div>
<div class="c" style="left:171px;top:546px;width:175px;overflow:hidden">Electricité</div>
<div class="c r" style="left:347px;top:546px;width:134px">51 832,54</div>
<div class="c r" style="left:621px;top:546px;width:83px">-51 832,54</div>
<div class="c r g" style="left:707px;top:546px;width:69px">-100.00%</div>
<div class="tri" style="top:562px"></div>
<div class="c" style="left:31px;top:564px">606120</div>
<div class="c" style="left:171px;top:564px;width:175px;overflow:hidden">Gaz</div>
<div class="c r" style="left:347px;top:564px;width:134px">3 745,47</div>
<div class="c r" style="left:621px;top:564px;width:83px">-3 745,47</div>
<div class="c r g" style="left:707px;top:564px;width:69px">-100.00%</div>
<div class="tri" style="top:580px"></div>
<div class="c" style="left:31px;top:581px">606400</div>
<div class="c" style="left:171px;top:581px;width:175px;overflow:hidden">Fournitures administratives</div>
<div class="tri" style="top:597px"></div>
<div class="c" style="left:31px;top:598px">607100</div>
<div class="c" style="left:171px;top:598px;width:175px;overflow:hidden">Achat de marchandises</div>
<div class="c r" style="left:347px;top:598px;width:134px">1 520,56</div>
<div class="c r" style="left:484px;top:598px;width:134px">42 972,08</div>
<div class="c r" style="left:621px;top:598px;width:83px">41 451,52</div>
<div class="c r rd" style="left:707px;top:598px;width:69px">96.46%</div>
<div class="tri" style="top:614px"></div>
<div class="c" style="left:31px;top:615px">612200</div>
<div class="c" style="left:171px;top:615px;width:175px;overflow:hidden">Crédit-bail mobilier</div>
<div class="c r" style="left:347px;top:615px;width:134px">53 392,60</div>
<div class="c r" style="left:484px;top:615px;width:134px">8 192,60</div>
<div class="c r" style="left:621px;top:615px;width:83px">-45 200,00</div>
<div class="c r g" style="left:707px;top:615px;width:69px">-551.72%</div>
<div class="tri" style="top:631px"></div>
<div class="c" style="left:31px;top:632px">613500</div>
<div class="c" style="left:171px;top:632px;width:175px;overflow:hidden">Locations immobilières</div>
<div class="c r" style="left:347px;top:632px;width:134px">4 983,33</div>
<div class="c r" style="left:484px;top:632px;width:134px">4 983,33</div>
<div class="tri" style="top:648px"></div>
<div class="c" style="left:31px;top:649px">615400</div>
<div class="c" style="left:171px;top:649px;width:175px;overflow:hidden">Entretien locaux</div>
<div class="tri" style="top:665px"></div>
<div class="c" style="left:31px;top:666px">615510</div>
<div class="c" style="left:171px;top:666px;width:175px;overflow:hidden">Entretien matériel de transport</div>
<div class="c r" style="left:347px;top:666px;width:134px">9 878,52</div>
<div class="c r" style="left:621px;top:666px;width:83px">-9 878,52</div>
<div class="c r g" style="left:707px;top:666px;width:69px">-100.00%</div>
<div class="tri" style="top:682px"></div>
<div class="c" style="left:31px;top:683px">616100</div>
<div class="c" style="left:171px;top:683px;width:175px;overflow:hidden">Assurances</div>
<div class="c r" style="left:484px;top:683px;width:134px">18 711,72</div>
<div class="c r" style="left:621px;top:683px;width:83px">18 711,72</div>
<div class="c r rd" style="left:707px;top:683px;width:69px">100.00%</div>
<div class="tri" style="top:699px"></div>
<div class="c" style="left:31px;top:700px">618100</div>
<div class="c" style="left:171px;top:700px;width:175px;overflow:hidden">Documentation générale</div>
<div class="tri" style="top:716px"></div>
<div class="c" style="left:31px;top:717px">618300</div>
<div class="c" style="left:171px;top:717px;width:175px;overflow:hidden">Documentation technique</div>
<div class="c r" style="left:347px;top:717px;width:134px">545,18</div>
<div class="c r" style="left:621px;top:717px;width:83px">-545,18</div>
<div class="c r g" style="left:707px;top:717px;width:69px">-100.00%</div>
<div class="tri" style="top:733px"></div>
<div class="c" style="left:31px;top:734px">622600</div>
<div class="c" style="left:171px;top:734px;width:175px;overflow:hidden">Honoraires</div>
<div class="c r" style="left:347px;top:734px;width:134px">1 056,46</div>
<div class="c r" style="left:484px;top:734px;width:134px">528,23</div>
<div class="c r" style="left:621px;top:734px;width:83px">-528,23</div>
<div class="c r g" style="left:707px;top:734px;width:69px">-100.00%</div>
<div class="tri" style="top:750px"></div>
<div class="c" style="left:31px;top:751px">623100</div>
<div class="c" style="left:171px;top:751px;width:175px;overflow:hidden">Publicité, annonces</div>
<div class="c r" style="left:347px;top:751px;width:134px">3 200,00</div>
<div class="c r" style="left:621px;top:751px;width:83px">-3 200,00</div>
<div class="c r g" style="left:707px;top:751px;width:69px">-100.00%</div>
<div class="tri" style="top:767px"></div>
<div class="c" style="left:31px;top:768px">626000</div>
<div class="c" style="left:171px;top:768px;width:175px;overflow:hidden">Frais P.T.T. (poste)</div>
<div class="c r" style="left:347px;top:768px;width:134px">460,00</div>
<div class="c r" style="left:621px;top:768px;width:83px">-460,00</div>
<div class="c r g" style="left:707px;top:768px;width:69px">-100.00%</div>
<div class="tri" style="top:784px"></div>
<div class="c" style="left:31px;top:785px">626200</div>
<div class="c" style="left:171px;top:785px;width:175px;overflow:hidden">Téléphone</div>
<div class="c r" style="left:347px;top:785px;width:134px">9 878,52</div>
<div class="c r" style="left:484px;top:785px;width:134px">4 330,81</div>
<div class="c r" style="left:621px;top:785px;width:83px">-5 547,71</div>
<div class="c r g" style="left:707px;top:785px;width:69px">-128.10%</div>
<div class="tri" style="top:801px"></div>
<div class="c" style="left:31px;top:802px">627000</div>
<div class="c" style="left:171px;top:802px;width:175px;overflow:hidden">Services bancaires</div>
<div class="tri" style="top:818px"></div>
<div class="c" style="left:31px;top:819px">637800</div>
<div class="c" style="left:171px;top:819px;width:175px;overflow:hidden">Taxes diverses</div>
<div class="tri" style="top:835px"></div>
<div class="c" style="left:31px;top:836px">64110000</div>
<div class="c" style="left:171px;top:836px;width:175px;overflow:hidden">Salaires, appointements, commissions</div>
<div class="c r" style="left:347px;top:836px;width:134px">11 434,00</div>
<div class="c r" style="left:621px;top:836px;width:83px">-11 434,00</div>
<div class="c r g" style="left:707px;top:836px;width:69px">-100.00%</div>
<div class="tri" style="top:852px"></div>
<div class="c" style="left:31px;top:853px">64510000</div>
<div class="c" style="left:171px;top:853px;width:175px;overflow:hidden">Cotisations URSSAF</div>
<div class="c r" style="left:347px;top:853px;width:134px">2 090,00</div>
<div class="c r" style="left:621px;top:853px;width:83px">-2 090,00</div>
<div class="c r g" style="left:707px;top:853px;width:69px">-100.00%</div>
<div class="tri" style="top:869px"></div>
<div class="c" style="left:31px;top:870px">64531000</div>
<div class="c" style="left:171px;top:870px;width:175px;overflow:hidden">Retraites + prévoyances non cadres</div>
<div class="c r" style="left:347px;top:870px;width:134px">1 420,00</div>
<div class="c r" style="left:621px;top:870px;width:83px">-1 420,00</div>
<div class="c r g" style="left:707px;top:870px;width:69px">-100.00%</div>
<div class="tri" style="top:886px"></div>
<div class="c" style="left:31px;top:887px">64540000</div>
<div class="c" style="left:171px;top:887px;width:175px;overflow:hidden">Cotisations ASSEDIC</div>
<div class="c r" style="left:347px;top:887px;width:134px">1 724,00</div>
<div class="c r" style="left:621px;top:887px;width:83px">-1 724,00</div>
<div class="c r g" style="left:707px;top:887px;width:69px">-100.00%</div>
<div class="tri" style="top:903px"></div>
<div class="c" style="left:31px;top:904px">6650000</div>
<div class="c" style="left:171px;top:904px;width:175px;overflow:hidden">Escomptes accordés</div>
<div class="c r" style="left:484px;top:904px;width:134px">52,83</div>
<div class="c r" style="left:621px;top:904px;width:83px">52,83</div>
<div class="c r rd" style="left:707px;top:904px;width:69px">100.00%</div>
<div class="tri" style="top:920px"></div>
<div class="c" style="left:31px;top:921px">681120</div>
<div class="c" style="left:171px;top:921px;width:175px;overflow:hidden">Dotations /immob. corporelles</div>
<div class="c r" style="left:347px;top:921px;width:134px">24 331,93</div>
<div class="c r" style="left:621px;top:921px;width:83px">-24 331,93</div>
<div class="c r g" style="left:707px;top:921px;width:69px">-100.00%</div>
<div class="tri" style="top:937px"></div>
<div class="c" style="left:31px;top:938px">681740</div>
<div class="c" style="left:171px;top:938px;width:175px;overflow:hidden">Dot. aux dépréciations des créances</div>
<div class="tri" style="top:954px"></div>
<div class="c" style="left:31px;top:955px">687250</div>
<div class="c" style="left:171px;top:955px;width:175px;overflow:hidden">Dot /amortissements dérogatoires</div>
<div class="c r" style="left:347px;top:955px;width:134px">69,44</div>
<div class="c r" style="left:621px;top:955px;width:83px">-69,44</div>
<div class="c r g" style="left:707px;top:955px;width:69px">-100.00%</div>
<div class="c b" style="left:29px;top:972px;width:139px;text-align:center">Total</div>
<div class="c r tt" style="left:347px;top:972px;width:134px">293 013,40</div>
<div class="c r tt" style="left:484px;top:972px;width:134px">106 430,67</div>
<div class="c r tt" style="left:621px;top:972px;width:83px">-186 582,73</div>
<div class="c r tt" style="left:707px;top:972px;width:69px">-175.31%</div>
</div>
<!-- BOTTOM -->
<div id="bottom">
<!-- vertical scrollbar -->
<div class="a" style="left:861px;top:195px;width:15px;height:795px;background:#e9e9e9"></div>
<div class="a" style="left:861px;top:195px;width:13px;height:14px;background:#fff;border:1px solid #ababab"></div>
<svg class="a" style="left:865px;top:200px" width="7" height="4" viewBox="0 0 7 4"><path d="M0 4L3.500 0 7 4z" fill="#666"></path></svg>
<div class="a" style="left:861px;top:211px;width:13px;height:754px;background:#fff;border:1px solid #ababab"></div>
<div class="a" style="left:861px;top:975px;width:13px;height:13px;background:#fff;border:1px solid #ababab"></div>
<svg class="a" style="left:865px;top:981px" width="7" height="4" viewBox="0 0 7 4"><path d="M0 0L3.500 4 7 0z" fill="#666"></path></svg>
<!-- tab bar -->
<div class="a" style="left:3px;top:989px;width:876px;height:28px;background:#f3f3f3"></div>
<div class="a" style="left:3px;top:989px;width:855px;height:1px;background:#ababab"></div>
<svg class="a" style="left:30px;top:998px" width="5" height="9" viewBox="0 0 5 9"><path d="M5 0V9L0 4.500z" fill="#c6c6c6"></path></svg>
<svg class="a" style="left:58px;top:998px" width="5" height="9" viewBox="0 0 5 9"><path d="M0 0V9L5 4.500z" fill="#c6c6c6"></path></svg>
<div class="a" style="left:103px;top:993px;width:1px;height:20px;background:#ababab"></div>
<div class="t" style="left: 117.5px; top: 996px; font-size: 13px; line-height: 14px; color: rgb(68, 68, 68); --w: 78; transform: scaleX(0.9813); transform-origin: 0px 50%;">Prise en Main</div>
<div class="a" style="left:211px;top:990px;width:190px;height:22px;background:#fff;border-left:1px solid #ababab;border-right:1px solid #ababab;border-bottom:2px solid #217346"></div>
<div class="t" style="left: 223px; top: 996px; font-size: 13px; line-height: 14px; font-weight: bold; color: rgb(33, 115, 70); --w: 167; transform: scaleX(0.9795); transform-origin: 0px 50%;">Evolution Poste de charges</div>
<svg class="a" style="left:434px;top:994px" width="18" height="18" viewBox="0 0 18 18"><circle cx="9" cy="9" r="7.500" fill="#fff" stroke="#777" stroke-width="1.200"></circle><path d="M9 5v8M5 9h8" stroke="#666" stroke-width="1.500"></path></svg>
<div class="a" style="left:528px;top:996px;width:2px;height:2px;background:#aaa"></div><div class="a" style="left:528px;top:1001px;width:2px;height:2px;background:#aaa"></div><div class="a" style="left:528px;top:1006px;width:2px;height:2px;background:#aaa"></div>
<!-- horizontal scrollbar -->
<div class="a" style="left:545px;top:996px;width:313px;height:15px;background:#e6e6e6"></div>
<div class="a" style="left:545px;top:996px;width:13px;height:13px;background:#fff;border:1px solid #ababab"></div>
<svg class="a" style="left:550px;top:999px" width="4" height="8" viewBox="0 0 4 8"><path d="M4 0V8L0 4z" fill="#666"></path></svg>
<div class="a" style="left:571px;top:996px;width:113px;height:13px;background:#fff;border:1px solid #ababab"></div>
<div class="a" style="left:843px;top:996px;width:13px;height:13px;background:#fff;border:1px solid #ababab"></div>
<svg class="a" style="left:849px;top:999px" width="4" height="8" viewBox="0 0 4 8"><path d="M0 0V8L4 4z" fill="#666"></path></svg>
</div>
</div>


</body></html>
